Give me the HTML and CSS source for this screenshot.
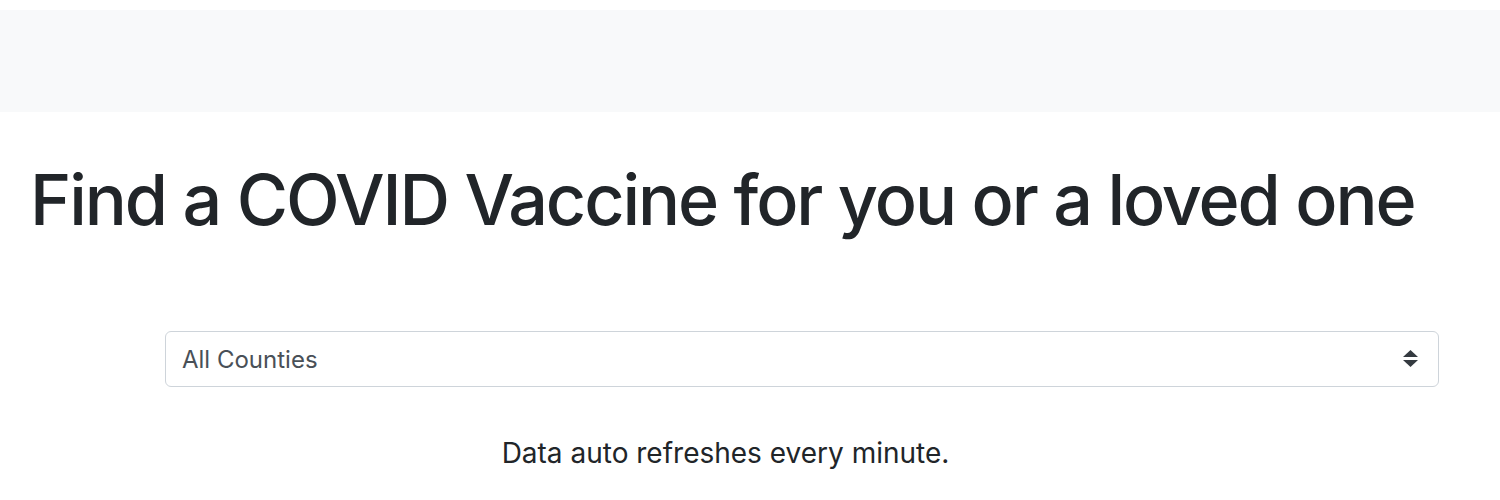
FILE: index.html
```html
<!DOCTYPE html>
<html lang="en">
<head>
    <meta charset="UTF-8">
    <meta name="viewport" content="width=device-width, initial-scale=1.0">
    <title>Find a COVID Vaccine</title>
    <link rel="stylesheet" href="styles.css">
</head>
<body>

    <nav class="topbar"></nav>

    <main class="page">
        <h1 class="title">Find a COVID Vaccine for you or a loved one</h1>

        <div class="filter">
            <div class="select-wrap">
                <select class="county-select">
                    <option>All Counties</option>
                </select>
                <svg class="select-arrows" width="15" height="17" viewBox="0 0 15 17">
                    <path d="M7.5 0 L15 7 L0 7 Z" fill="#343a40"/>
                    <path d="M0 10 L15 10 L7.5 17 Z" fill="#343a40"/>
                </svg>
            </div>
        </div>

        <p class="refresh-note">Data auto refreshes every minute.</p>
    </main>

</body>
</html>
```

FILE: styles.css
```css
body {
    margin: 0;
    font-family: Inter, "Liberation Sans", Arial, sans-serif;
    color: #212529;
    background: #ffffff;
}
.topbar {
    margin-top: 10px;
    height: 102px;
    background-color: #f8f9fa;
}
.page {
    padding: 0 30px;
}
.title {
    margin: 46px 0 0 0;
    font-size: 70px;
    font-weight: 500;
    line-height: 1.2;
    letter-spacing: -2.1px;
    white-space: nowrap;
}
.filter {
    margin-top: 89px;
    padding-left: 135px;
    width: 1274px;
}
.select-wrap {
    position: relative;
}
.county-select {
    display: block;
    width: 100%;
    height: 56px;
    padding: 0 16px;
    font-family: Inter, "Liberation Sans", Arial, sans-serif;
    font-size: 24px;
    color: #495057;
    background: #ffffff;
    border: 1px solid #ced4da;
    border-radius: 6px;
    appearance: none;
    -webkit-appearance: none;
    outline: none;
}
.select-arrows {
    position: absolute;
    right: 21px;
    top: 19px;
    pointer-events: none;
}
.refresh-note {
    margin: 45px 0 0 0;
    width: 1391px;
    text-align: center;
    font-size: 28px;
    line-height: 42px;
}
```
